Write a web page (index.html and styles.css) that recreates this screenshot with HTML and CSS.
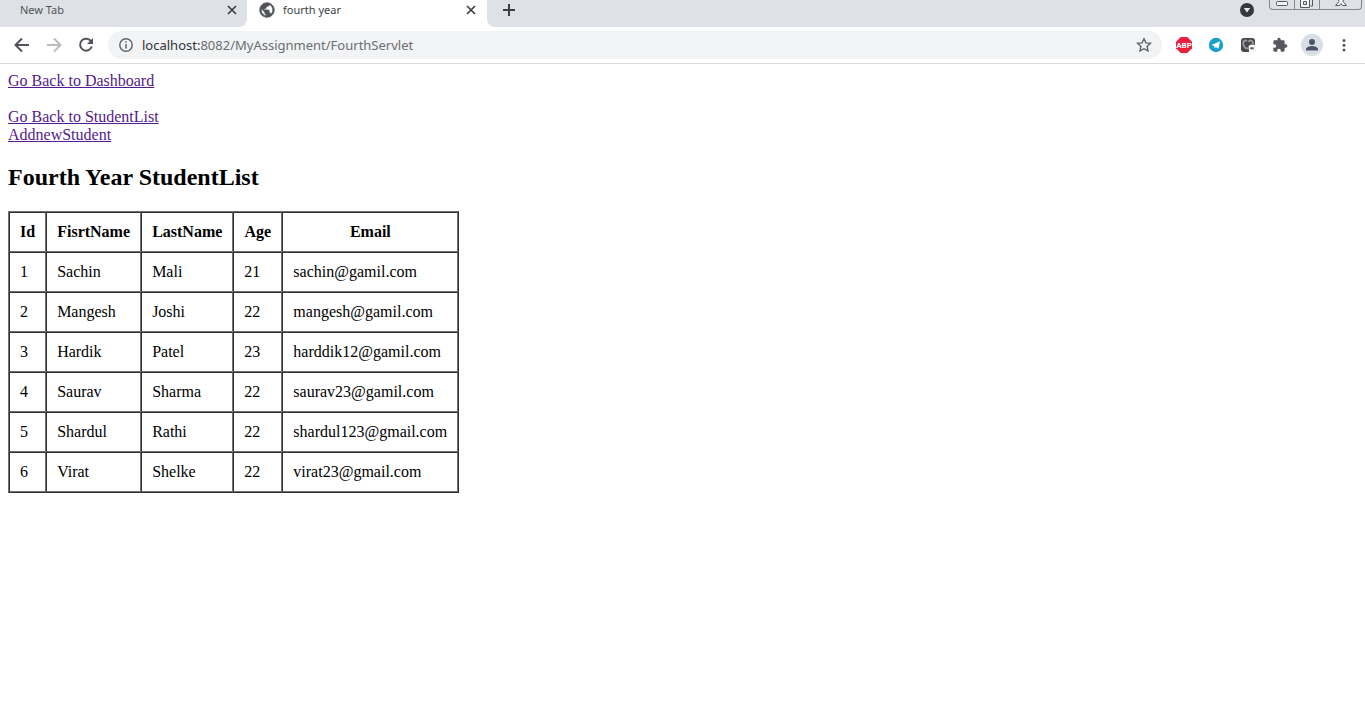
FILE: index.html
```html
<!DOCTYPE html>
<html lang="en">
<head>
<meta charset="utf-8">
<title>fourth year</title>
<link rel="stylesheet" href="styles.css">
</head>
<body>
<header class="browser">
  <div class="tabstrip">
    <div class="tab">
      <span class="tab-title">New Tab</span>
      <button class="icon-btn close" aria-label="Close New Tab"><svg width="10" height="10" viewBox="0 0 10 10"><path d="M1 1l8 8M9 1L1 9" stroke="#3c4043" stroke-width="1.700"/></svg></button>
    </div>
    <div class="tab tab-active">
      <svg class="favicon" width="16" height="16" viewBox="1 1 22 22"><path d="M12 2C6.480 2 2 6.480 2 12s4.480 10 10 10 10-4.480 10-10S17.520 2 12 2zm-1 17.930c-3.950-.49-7-3.850-7-7.930 0-.62.080-1.210.210-1.790L9 15v1c0 1.100.9 2 2 2v1.930zm6.900-2.540c-.26-.81-1-1.390-1.900-1.390h-1v-3c0-.55-.45-1-1-1H8v-2h2c.55 0 1-.45 1-1V7h2c1.100 0 2-.9 2-2v-.41c2.930 1.190 5 4.060 5 7.410 0 2.080-.8 3.970-2.100 5.390z" fill="#505459" stroke="#505459" stroke-width="1"/></svg>
      <span class="tab-title">fourth year</span>
      <button class="icon-btn close" aria-label="Close fourth year"><svg width="10" height="10" viewBox="0 0 10 10"><path d="M1 1l8 8M9 1L1 9" stroke="#3c4043" stroke-width="1.700"/></svg></button>
    </div>
    <div class="strip-rest">
      <button class="icon-btn" aria-label="New tab"><svg width="12" height="12" viewBox="0 0 12 12"><path d="M6 0v12M0 6h12" stroke="#3c4043" stroke-width="2"/></svg></button>
      <button class="icon-btn search" aria-label="Search tabs"><svg width="14" height="14" viewBox="0 0 14 14"><circle cx="7" cy="7" r="7" fill="#35383c"/><path d="M3.800 5h6.400L7 9.500z" fill="#e8eaed"/></svg></button>
      <div class="window-controls">
        <button class="win-btn" aria-label="Minimize"><svg width="14" height="8" viewBox="0 0 14 8"><rect x="1.500" y="1.500" width="11" height="4" rx="1" fill="#f4f5f6" stroke="#55585c"/></svg></button>
        <button class="win-btn" aria-label="Restore"><svg width="14" height="9" viewBox="0 0 14 9"><path d="M3.500 0V-1h9v7h-2" fill="none" stroke="#55585c"/><path d="M.5-1h9v8.500h-9z" fill="#f4f5f6" stroke="#55585c"/><path d="M3.500 1.500h3v3h-3z" fill="#dee1e6" stroke="#55585c"/></svg></button>
        <button class="win-btn win-close" aria-label="Close"><svg width="14" height="8" viewBox="0 0 14 8"><path d="M4-1L5 1.500 1.500 5.500h4L7 3.500l1.500 2h4L9 1.500l1-3" fill="#f4f5f6" stroke="#55585c"/></svg></button>
      </div>
    </div>
  </div>
  <div class="toolbar">
    <button class="icon-btn" aria-label="Back"><svg width="16" height="16" viewBox="0 0 16 16"><path d="M15 8H2M8 1.500L1.500 8 8 14.500" fill="none" stroke="#505459" stroke-width="2"/></svg></button>
    <button class="icon-btn" aria-label="Forward" disabled><svg width="16" height="16" viewBox="0 0 16 16"><path d="M1 8h13M8 1.500L14.500 8 8 14.500" fill="none" stroke="#babcbe" stroke-width="2"/></svg></button>
    <button class="icon-btn" aria-label="Reload"><svg width="16" height="16" viewBox="0 0 16 16"><path d="M13.200 4.500A6 6 0 1 0 13.800 9.500" fill="none" stroke="#505459" stroke-width="2"/><path d="M15 1v6H9z" fill="#505459"/></svg></button>
    <div class="omnibox">
      <svg width="14" height="14" viewBox="0 0 14 14"><circle cx="7" cy="7" r="6.200" fill="none" stroke="#5f6368" stroke-width="1.400"/><path d="M7 6v4.500M7 3.300v1.500" stroke="#5f6368" stroke-width="1.500"/></svg>
      <div class="url"><span class="host">localhost:</span>8082/MyAssignment/FourthServlet</div>
      <button class="icon-btn" aria-label="Bookmark this tab"><svg width="16" height="16" viewBox="0 0 16 16"><path d="M8 1.800l1.900 4.100 4.500.5-3.300 3.100.9 4.400L8 11.700l-4 2.200.9-4.400L1.600 6.400l4.500-.5z" fill="none" stroke="#5f6368" stroke-width="1.400"/></svg></button>
    </div>
    <div class="extensions">
      <button class="icon-btn" aria-label="Adblock Plus"><svg width="16" height="16" viewBox="0 0 16 16"><path d="M4.700 0h6.600L16 4.700v6.600L11.300 16H4.700L0 11.300V4.700z" fill="#e9203f"/><text class="abp" x="8" y="11" text-anchor="middle">ABP</text></svg></button>
      <button class="icon-btn" aria-label="Telegram"><svg width="16" height="16" viewBox="0 0 16 16"><circle cx="8" cy="8" r="7.200" fill="#1a9fcb"/><path d="M3.500 7.900L12 4.300l-1.500 7.500-2.600-1.700-1.300 1.400-.3-2.400z" fill="#fff"/></svg></button>
      <button class="icon-btn" aria-label="Screen reader extension"><svg width="16" height="16" viewBox="0 0 16 16"><rect x="1" y="1" width="14" height="14" rx="3" fill="#47494c"/><path d="M7 4C4 2.500 2.500 5 3.500 8s3 4 4.500 3M8.500 5c1-2.500 4.500-2 4.500 2" fill="none" stroke="#9b9da0" stroke-width="1.800"/><path d="M8.500 9L11 7.500l5 .5v7H9z" fill="#f7f7f7"/><path d="M10.200 10.300h3.600v2h-3.600z" fill="#606366"/></svg></button>
      <button class="icon-btn" aria-label="Extensions"><svg width="16" height="16" viewBox="0 0 24 24"><path d="M20.500 11H19V7c0-1.100-.9-2-2-2h-4V3.500a2.500 2.500 0 0 0-5 0V5H4c-1.100 0-2 .9-2 2v3.800h1.500c1.500 0 2.700 1.200 2.700 2.700S5 16.200 3.500 16.200H2V20c0 1.100.9 2 2 2h3.800v-1.500c0-1.500 1.200-2.700 2.700-2.700s2.700 1.200 2.700 2.700V22H17c1.100 0 2-.9 2-2v-4h1.500a2.500 2.500 0 0 0 0-5z" fill="#56595d"/></svg></button>
      <button class="icon-btn" aria-label="Profile"><svg width="22" height="22" viewBox="0 0 22 22"><circle cx="11" cy="11" r="11" fill="#d9dee5"/><circle cx="11" cy="8" r="3" fill="#4b5566"/><path d="M5 16.500v-1.500c0-2 4-3 6-3s6 1 6 3v1.500z" fill="#4b5566"/></svg></button>
      <button class="icon-btn" aria-label="Menu"><svg width="16" height="16" viewBox="0 0 16 16" fill="#505459"><circle cx="8" cy="3.500" r="1.500"/><circle cx="8" cy="8.300" r="1.500"/><circle cx="8" cy="13" r="1.500"/></svg></button>
    </div>
  </div>
</header>
<main class="page">
  <a class="link" href="#dashboard">Go Back to Dashboard</a><br><br>
  <a class="link" href="#students">Go Back to StudentList</a><br>
  <a class="link" href="#add">AddnewStudent</a>
  <h2 class="heading">Fourth Year StudentList</h2>
  <table class="students">
    <colgroup><col class="c-id"><col class="c-first"><col class="c-last"><col class="c-age"><col class="c-email"></colgroup>
    <thead><tr><th>Id</th><th>FisrtName</th><th>LastName</th><th>Age</th><th>Email</th></tr></thead>
    <tbody>
      <tr><td>1</td><td>Sachin</td><td>Mali</td><td>21</td><td>sachin@gamil.com</td></tr>
      <tr><td>2</td><td>Mangesh</td><td>Joshi</td><td>22</td><td>mangesh@gamil.com</td></tr>
      <tr><td>3</td><td>Hardik</td><td>Patel</td><td>23</td><td>harddik12@gamil.com</td></tr>
      <tr><td>4</td><td>Saurav</td><td>Sharma</td><td>22</td><td>saurav23@gamil.com</td></tr>
      <tr><td>5</td><td>Shardul</td><td>Rathi</td><td>22</td><td>shardul123@gmail.com</td></tr>
      <tr><td>6</td><td>Virat</td><td>Shelke</td><td>22</td><td>virat23@gmail.com</td></tr>
    </tbody>
  </table>
</main>
</body>
</html>
```
FILE: styles.css
```css
* { box-sizing: border-box; }
body { margin: 0; background: #fff; color: #000; font: 16px/18px "Liberation Serif", "Times New Roman", serif; }
svg { display: block; flex: none; }
.browser { font-family: "Noto Sans", "Open Sans", sans-serif; border-bottom: 1px solid #d8dadd; }
.icon-btn { display: flex; align-items: center; justify-content: center; flex: none; padding: 0; border: 0; background: none; }
.tabstrip { display: flex; height: 27px; background: #fff; }
.tab { display: flex; align-items: center; width: 247px; padding: 0 10px 7px 20px; background: #dee1e6; border-radius: 0 0 8px 0; font-size: 11px; color: #505458; }
.tab-active { width: 240px; padding: 0 11px 7px 12px; background: #fff; color: #3c4043; }
.favicon { margin-right: 8px; }
.tab-title { flex: 1; }
.strip-rest { display: flex; flex: 1; align-items: flex-start; padding: 0 3px 0 16px; background: #dee1e6; border-radius: 0 0 0 8px; }
.strip-rest .icon-btn { height: 20px; }
.strip-rest .search { margin-left: auto; margin-right: 15px; }
.window-controls { display: flex; height: 10px; border: 1px solid #84878b; border-top: 0; border-radius: 0 0 4px 4px; }
.win-btn { display: flex; justify-content: center; width: 25px; height: 9px; padding: 0; border: 0; border-right: 1px solid #84878b; background: none; overflow: hidden; }
.win-close { width: 41px; border-right: 0; }
.toolbar { display: flex; align-items: center; gap: 16px; height: 36px; padding: 0 5px 0 14px; }
.omnibox { display: flex; align-items: center; flex: 1; gap: 9px; height: 28px; margin-left: -2px; padding: 0 10px 0 11px; border-radius: 14px; background: #f1f3f4; }
.url { flex: 1; font-size: 13px; line-height: 20px; color: #6a6e72; }
.host { color: #303338; }
.extensions { display: flex; align-items: center; margin-left: -10px; }
.extensions .icon-btn { width: 32px; }
.abp { font: bold 8px Roboto, sans-serif; fill: #fff; }
.page { padding: 8px; }
.link { color: #551a8b; text-decoration: underline; }
.heading { margin: 20px 0; font-size: 24px; line-height: 27px; font-weight: bold; }
.students { border: 1px solid; border-color: #707070 #303030 #303030 #707070; border-spacing: 0; }
.students th, .students td { padding: 10px; border: 1px solid; border-color: #303030 #707070 #707070 #303030; }
.c-id { width: 37px; }
.c-first { width: 95px; }
.c-last { width: 92px; }
.c-age { width: 49px; }
.c-email { width: 176px; }
```
